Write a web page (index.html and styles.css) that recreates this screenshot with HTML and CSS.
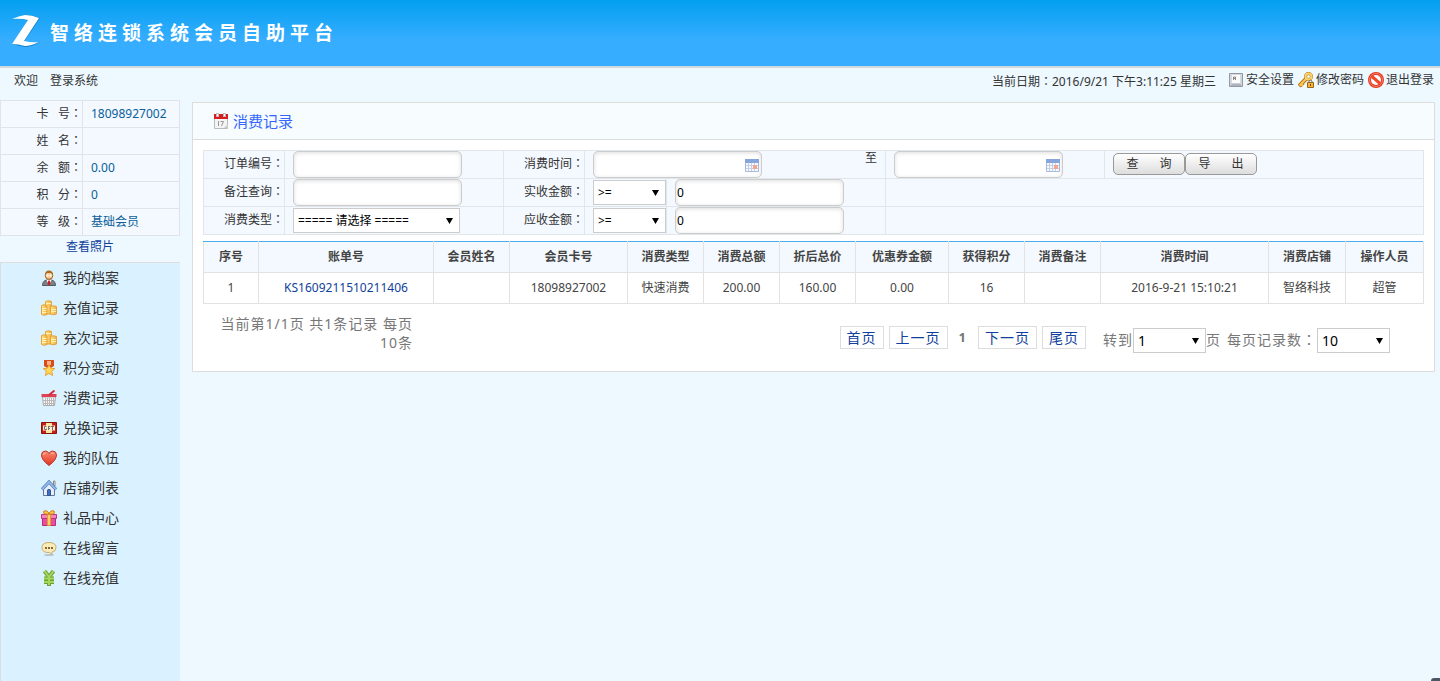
FILE: index.html
```
<!DOCTYPE html>
<html>
<head>
    <meta charset="UTF-8">
    <title>智络连锁系统会员自助平台</title>
    <link rel="stylesheet" href="styles.css">
</head>
<body>

<!-- Shared icons -->
<svg class="defs" width="0" height="0">
    <defs>
        <linearGradient id="gold" x1="0" y1="0" x2="1" y2="0">
            <stop offset="0" stop-color="#ffe98c"/>
            <stop offset="1" stop-color="#f2a93b"/>
        </linearGradient>
        <linearGradient id="red" x1="0" y1="0" x2="0" y2="1">
            <stop offset="0" stop-color="#ff8a70"/>
            <stop offset="1" stop-color="#dd3420"/>
        </linearGradient>
        <symbol id="coins" viewBox="0 0 16 16">
            <path d="M4.500 1.500q3-1.500 6 0v12.500h-6z" fill="url(#gold)" stroke="#e3a23c"/>
            <path d="M.5 5.500q2.500-1.500 5.500 0v9q-3 1.500-5.500 0z" fill="url(#gold)" stroke="#e3a23c"/>
            <path d="M9.500 6.500q3-1.500 6 0v7.500q-3 1.500-6 0z" fill="url(#gold)" stroke="#e3a23c"/>
            <path d="M1 8.500h4.500M1 10.500h4.500M1 12.500h4.500M10 9.500h5M10 11.500h5M5 3.500h5" stroke="#fff3b5"/>
        </symbol>
        <symbol id="datepick" viewBox="0 0 14 14">
            <path d="M.5 2.500h13v11H.5z" fill="#f5f8ff" stroke="#a9bbdc"/>
            <path d="M0 1h14v4H0z" fill="#86a5dc"/>
            <path d="M1 7.500h12M1 10.500h12M3.500 5v8M6.500 5v8M9.500 5v8" stroke="#c3d0ea"/>
            <path d="M8 7h4v4H8z" fill="#f2a58f"/>
        </symbol>
    </defs>
</svg>

<header class="header">
    <svg class="logo" viewBox="0 0 28 32">
        <path d="M1 4Q8 1 14 0Q21 0 28 3L12 27Q20 28 28 27Q20 32 13 32Q7 31 0 29L17 6Q9 3 1 4z" fill="#1680cc"/>
        <path d="M0 4Q7 1 13 0Q20 0 27 3L12 26Q20 28 27 27Q19 31 13 31Q6 29 0 29L16 5Q8 3 0 4z" fill="#fff"/>
    </svg>
    <h1>智络连锁系统会员自助平台</h1>
</header>

<!-- Welcome bar -->
<div class="topbar">
    <div class="welcome"><span>欢迎</span><span>登录系统</span></div>
    <div class="today">当前日期<span class="colon">：</span>2016/9/21 下午3:11:25 星期三</div>
    <a href="#">
        <svg class="icon" viewBox="0 0 16 16">
            <path d="M1.500 1.500h13v13h-13z" fill="#d5d8dd" stroke="#9297a0"/>
            <path d="M4 3h8v8.500H4z" fill="#fbfbfc"/>
            <path d="M2 14l2-2.500h8l2 2.500z" fill="#aeb3bb"/>
            <path d="M5.500 8V5h2v3M5.500 6.500h2" fill="none" stroke="#888"/>
        </svg>安全设置</a>
    <a href="#">
        <svg class="icon" viewBox="0 0 16 16">
            <path d="M8 7l-7 7M3 11.500l2 2" stroke="#b4721a" stroke-width="4"/>
            <circle cx="10.500" cy="4.500" r="3" fill="none" stroke="#b4721a" stroke-width="3"/>
            <path d="M8 7l-6.500 6.500M3 12l2 2" stroke="#ffc84e" stroke-width="2"/>
            <circle cx="10.500" cy="4.500" r="3" fill="none" stroke="#ffd469" stroke-width="2"/>
            <path d="M11 11V9q1.500-2 3 0v2" fill="none" stroke="#777"/>
            <path d="M9.500 10.500h6v5h-6z" fill="#f5b536" stroke="#9b6515"/>
            <path d="M12.500 12v2" stroke="#704500"/>
        </svg>修改密码</a>
    <a href="#">
        <svg class="icon" viewBox="0 0 16 16">
            <circle cx="8" cy="8" r="8" fill="#e33a20"/>
            <circle cx="8" cy="8" r="6.500" fill="none" stroke="#ff8062"/>
            <circle cx="8" cy="8" r="5" fill="#fff"/>
            <path d="M4 4.500l8 7" stroke="#ee4a2c" stroke-width="3"/>
        </svg>退出登录</a>
</div>

<div class="page">
    <aside class="sidebar">
        <table class="member">
            <tr><th>卡&nbsp;&nbsp; 号<span class="colon">：</span></th><td>18098927002</td></tr>
            <tr><th>姓&nbsp;&nbsp; 名<span class="colon">：</span></th><td></td></tr>
            <tr><th>余&nbsp;&nbsp; 额<span class="colon">：</span></th><td>0.00</td></tr>
            <tr><th>积&nbsp;&nbsp; 分<span class="colon">：</span></th><td>0</td></tr>
            <tr><th>等&nbsp;&nbsp; 级<span class="colon">：</span></th><td>基础会员</td></tr>
        </table>
        <a class="photo" href="#">查看照片</a>
        <nav class="menu">
            <a href="#">
                <svg class="icon" viewBox="0 0 16 16">
                    <path d="M1.500 15.500q0-5 4.500-5.500h4q4.500.500 4.500 5.500z" fill="#7c8089" stroke="#54585f"/>
                    <path d="M5.500 10l2.500 5 2.500-5z" fill="#fff"/>
                    <path d="M7.300 10.500h1.500l.700 3.500L8 15.500 6.500 14z" fill="#c32020"/>
                    <circle cx="8" cy="5.500" r="3.800" fill="#f8c78d" stroke="#a8641c"/>
                    <path d="M4 5Q4 .5 8 .5T12 5L10 3H6z" fill="#ad6c20"/>
                    <path d="M5.500 5.500h2M8.500 5.500h2" stroke="#fff" stroke-width="2"/>
                </svg>我的档案</a>
            <a href="#"><svg class="icon"><use href="#coins"/></svg>充值记录</a>
            <a href="#"><svg class="icon"><use href="#coins"/></svg>充次记录</a>
            <a href="#">
                <svg class="icon" viewBox="0 0 16 16">
                    <path d="M3 0h10v6l-5 3-5-3z" fill="#d84b1b"/>
                    <path d="M6 1h4v4H6z" fill="#ffb38a"/>
                    <path d="M8 4.500l1.700 3.700 4 .4-3 2.700.9 4.200L8 13.400l-3.600 2.100.9-4.200-3-2.700 4-.4z" fill="#ffd65b" stroke="#eba02c"/>
                </svg>积分变动</a>
            <a href="#">
                <svg class="icon" viewBox="0 0 16 16">
                    <path d="M1.500 7h13l-1 8.500h-11z" fill="#f8f8f8" stroke="#aaa"/>
                    <path d="M4.500 8v7M6.500 8v7M8.500 8v7M10.500 8v7M12.500 8v7M2 10.500h12M3 13.500h10" stroke="#b8b8b8"/>
                    <path d="M.500 4h15v3H.500z" fill="#df4254"/>
                    <path d="M8 5l5.500-4.500" stroke="#d42b3d" stroke-width="2"/>
                </svg>消费记录</a>
            <a href="#">
                <svg class="icon" viewBox="0 0 16 16">
                    <path d="M.5 2.500h15v11H.5z" fill="#c42217" stroke="#8c130c"/>
                    <path d="M5 3h6v10H5z" fill="#ffe3a0"/>
                    <path d="M2 5.500h12v5H2z" fill="#fff0cf"/>
                    <path d="M5.500 6.500H3.500v3h2v-1M7.500 6v4M7.500 6.500H9.500M7.500 8.500h1.500M10 6.500h3M11.500 6.500v3.500" fill="none" stroke="#77706a"/>
                </svg>兑换记录</a>
            <a href="#">
                <svg class="icon" viewBox="0 0 16 16">
                    <path d="M8 15.500Q.5 10 .5 5 .5 1 4.500 1 7 1 8 3.500 9 1 11.500 1q4 0 4 4 0 5-7.500 10.500z" fill="url(#red)" stroke="#b83a2b"/>
                    <path d="M2.500 5q0-2 2-2M10 3.500q2-1 3 0" stroke="#ffc0b0" fill="none"/>
                </svg>我的队伍</a>
            <a href="#">
                <svg class="icon" viewBox="0 0 16 16">
                    <path d="M12.500 1h1.500v5h-1.500z" fill="#eee" stroke="#888"/>
                    <path d="M2.500 8L8 3l5.500 5v7.500h-11z" fill="#e5edf9" stroke="#60779f"/>
                    <path d="M1 9.500l7-7.500 7 7.500" fill="none" stroke="#426ca9" stroke-width="3"/>
                    <path d="M1 9.500l7-7.500 7 7.500" fill="none" stroke="#8db6ea" stroke-width="2"/>
                    <path d="M6.500 15.500V10q1.500-1.500 3 0v5.500z" fill="#3e70bd" stroke="#315894"/>
                </svg>店铺列表</a>
            <a href="#">
                <svg class="icon" viewBox="0 0 16 16">
                    <path d="M1.500 8h13v7.500h-13z" fill="#e84fa4" stroke="#b52d7b"/>
                    <path d="M.5 4.500h15v4H.5z" fill="#f583bf" stroke="#ba3280"/>
                    <path d="M6.500 4.500h3v11h-3z" fill="#ffd25a" stroke="#e09b2c"/>
                    <path d="M8 4Q1 5 3 1q4-1 5 3Q9 0 13 1q2 4-5 3z" fill="#ffc34c" stroke="#c97b18"/>
                </svg>礼品中心</a>
            <a href="#">
                <svg class="icon" viewBox="0 0 16 16">
                    <ellipse cx="8" cy="15" rx="5" ry="1" fill="#b8c6cc"/>
                    <path d="M8 2.500q7 0 7 5 0 4-4 4.500v2.500L8.500 12.500Q1 13 1 7.500q0-5 7-5z" fill="#fbebb9" stroke="#c9ae6a"/>
                    <path d="M4 7h2v2H4zM7 7h2v2H7zM10 7h2v2h-2z" fill="#86683b"/>
                </svg>在线留言</a>
            <a href="#">
                <svg class="icon" viewBox="0 0 16 16">
                    <path d="M3.500 1L8 7l4.500-6M3 8.500h10M3 12h10M8 7v9" fill="none" stroke="#6ba436" stroke-width="4"/>
                    <path d="M3.500 1L8 7l4.500-6M3 8.500h10M3 12h10M8 7v8" fill="none" stroke="#a7d65d" stroke-width="2"/>
                </svg>在线充值</a>
        </nav>
    </aside>

    <main class="panel">
        <h2 class="panel-title">
            <svg class="icon" viewBox="0 0 16 16">
                <path d="M1.500 5h13v10.500h-13z" fill="#f4f4f4" stroke="#bbb"/>
                <path d="M1 1h14v5H1z" fill="#d91c1c"/>
                <path d="M3 0h3v4H3zM10 0h3v4h-3z" fill="#bbb"/>
                <path d="M4 1h1v2H4zM11 1h1v2h-1z" fill="#fff"/>
                <path d="M5.500 8v5M7.500 8.500h3l-2 4.500" fill="none" stroke="#999"/>
                <path d="M11 15l4-4v4z" fill="#ccc"/>
            </svg>消费记录</h2>

        <!-- Search form -->
        <form class="panel-body">
            <table class="filter">
                <colgroup>
                    <col class="w81"><col class="w219"><col class="w81"><col class="w82"><col class="w219"><col class="w219"><col class="w319">
                </colgroup>
                <tr>
                    <th><label for="orderNo">订单编号<span class="colon">：</span></label></th>
                    <td><input id="orderNo" class="text" type="text"></td>
                    <th><label for="dateFrom">消费时间<span class="colon">：</span></label></th>
                    <td colspan="2">
                        <div class="range">
                            <span class="date"><input id="dateFrom" class="text" type="text"><svg><use href="#datepick"/></svg></span>
                            <label for="dateTo">至</label>
                        </div>
                    </td>
                    <td><span class="date"><input id="dateTo" class="text" type="text"><svg><use href="#datepick"/></svg></span></td>
                    <td><div class="buttons"><button type="button">查&emsp;&ensp; 询</button><button type="button">导&emsp;&ensp; 出</button></div></td>
                </tr>
                <tr>
                    <th><label for="remark">备注查询<span class="colon">：</span></label></th>
                    <td><input id="remark" class="text" type="text"></td>
                    <th><label for="paidOp">实收金额<span class="colon">：</span></label></th>
                    <td><select id="paidOp" class="small"><option>&gt;=</option></select></td>
                    <td><input class="text" type="text" value="0" aria-label="实收金额"></td>
                    <td colspan="2"></td>
                </tr>
                <tr>
                    <th><label for="type">消费类型<span class="colon">：</span></label></th>
                    <td><select id="type" class="wide"><option>===== 请选择 =====</option></select></td>
                    <th><label for="dueOp">应收金额<span class="colon">：</span></label></th>
                    <td><select id="dueOp" class="small"><option>&gt;=</option></select></td>
                    <td><input class="text" type="text" value="0" aria-label="应收金额"></td>
                    <td colspan="2"></td>
                </tr>
            </table>

            <!-- Records -->
            <table class="records">
                <colgroup>
                    <col class="w55"><col class="w175"><col class="w76"><col class="w118"><col class="w76"><col class="w76"><col class="w76"><col class="w93"><col class="w76"><col class="w76"><col class="w168"><col class="w77"><col class="w78">
                </colgroup>
                <tr>
                    <th>序号</th><th>账单号</th><th>会员姓名</th><th>会员卡号</th><th>消费类型</th><th>消费总额</th><th>折后总价</th>
                    <th>优惠券金额</th><th>获得积分</th><th>消费备注</th><th>消费时间</th><th>消费店铺</th><th>操作人员</th>
                </tr>
                <tr>
                    <td>1</td><td><a href="#">KS1609211510211406</a></td><td></td><td>18098927002</td><td>快速消费</td><td>200.00</td><td>160.00</td>
                    <td>0.00</td><td>16</td><td></td><td>2016-9-21 15:10:21</td><td>智络科技</td><td>超管</td>
                </tr>
            </table>

            <!-- Pager -->
            <div class="pager">
                <div class="summary">当前第1/1页 共1条记录 每页10条</div>
                <div class="links">
                    <a href="#">首页</a>
                    <a href="#">上一页</a>
                    <strong>1</strong>
                    <a href="#">下一页</a>
                    <a href="#">尾页</a>
                </div>
                <div class="jump">
                    <label for="pageNo">转到</label>
                    <select id="pageNo" class="small"><option>1</option></select>
                    <span>页</span>
                    <label class="size-label" for="pageSize">每页记录数<span class="colon">：</span></label>
                    <select id="pageSize" class="small"><option>10</option></select>
                </div>
            </div>
        </form>
    </main>
</div>

<div class="corner"></div>

</body>
</html>
```
FILE: styles.css
```
* {
    box-sizing: border-box;
}

body {
    margin: 0;
    min-height: 100vh;
    display: flex;
    flex-direction: column;
    font-family: "Noto Sans", "Noto Sans CJK SC", sans-serif;
    font-size: 12px;
    line-height: 18px;
    color: #333;
    background-color: #edf8ff;
}

a {
    color: #333;
    text-decoration: none;
}

table {
    border-collapse: collapse;
    table-layout: fixed;
    width: 100%;
}

.defs {
    position: absolute;
}

.icon {
    width: 16px;
    height: 16px;
    flex: none;
}

/* Centred full-width colon */
.colon {
    font-family: "Noto Sans CJK TC", sans-serif;
}

/* Header */
.header {
    display: flex;
    align-items: center;
    gap: 10px;
    height: 68px;
    padding: 0 12px 4px;
    background: linear-gradient(#039ff0, #36adff 60%);
    border-bottom: 2px solid #d0d8e0;
}

.logo {
    width: 28px;
    height: 32px;
}

.header h1 {
    margin: 0;
    padding-top: 4px;
    font-size: 19px;
    line-height: 28px;
    letter-spacing: 5px;
    color: #fff;
}

/* Welcome bar */
.topbar {
    display: flex;
    align-items: center;
    gap: 4px;
    height: 24px;
    margin-bottom: 8px;
    padding: 0 6px 0 14px;
}

.welcome {
    display: flex;
    gap: 12px;
    flex: 1;
    padding-top: 2px;
}

.today {
    margin-right: 8px;
    padding-top: 2px;
}

.topbar a {
    display: flex;
    align-items: center;
    gap: 2px;
}

/* Sidebar */
.page {
    display: flex;
    flex: 1;
}

.sidebar {
    display: flex;
    flex-direction: column;
    width: 180px;
    flex: none;
}

.member th, .member td {
    height: 27px;
    padding: 0 0 1px 8px;
    border: 1px solid #e0e4e8;
    background-color: #f3f9ff;
    color: #0a6099;
    text-align: left;
}

.member th {
    width: 82px;
    padding: 0 0 2px;
    font-weight: normal;
    color: #333;
    text-align: right;
}

.photo {
    padding: 2px 0 6px;
    text-align: center;
    color: #10419c;
}

.menu {
    flex: 1;
    border: 1px solid #ddd;
    border-width: 1px 0 0 1px;
    background-color: #daf1ff;
}

.menu a {
    display: flex;
    align-items: center;
    gap: 6px;
    height: 30px;
    padding-left: 40px;
    font-size: 14px;
}

/* Main panel */
.panel {
    flex: 1;
    align-self: flex-start;
    margin: 2px 5px 0 12px;
    border: 1px solid #ddd;
    background-color: #fff;
}

.panel-title {
    display: flex;
    align-items: center;
    gap: 4px;
    height: 37px;
    margin: 0;
    padding-left: 20px;
    border-bottom: 1px solid #ddd;
    background-color: #f7fcff;
    font-size: 15px;
    font-weight: normal;
    color: #36f;
}

.panel-body {
    padding: 10px 10px 18px;
}

/* Search form */
.filter th, .filter td {
    height: 28px;
    padding: 0 0 0 8px;
    border: 1px solid #e0e6ea;
    background-color: #f3f9ff;
    text-align: left;
}

.filter th {
    padding: 0 0 2px;
    font-weight: normal;
    text-align: right;
}

.text {
    display: block;
    width: 169px;
    height: 27px;
    padding: 0 1px;
    border: 1px solid #ccc;
    border-radius: 5px;
    background-color: #fff;
    box-shadow: inset 0 1px 4px #ddd;
    font: inherit;
    color: #000;
}

/* Black drop-down arrow */
select {
    display: block;
    height: 25px;
    padding: 0 4px;
    border: 1px solid #ccc;
    border-radius: 0;
    appearance: none;
    background: #fff url("data:image/svg+xml,%3Csvg xmlns='http://www.w3.org/2000/svg' viewBox='0 0 7 6'%3E%3Cpath d='M0 0h7L3.500 6z'/%3E%3C/svg%3E") no-repeat right 6px center / 7px 6px;
    font: inherit;
    color: #000;
}

.small {
    width: 73px;
}

.wide {
    width: 167px;
}

.date {
    display: block;
    position: relative;
    width: 169px;
}

.date svg {
    position: absolute;
    top: 7px;
    right: 3px;
    width: 14px;
    height: 14px;
}

.range {
    display: flex;
    justify-content: space-between;
    line-height: 14px;
    padding-right: 8px;
}

.buttons {
    display: flex;
    padding-bottom: 2px;
}

.buttons button {
    width: 72px;
    height: 22px;
    padding: 0;
    border: 1px solid #999;
    border-radius: 5px;
    background: linear-gradient(#fff, #ddd);
    font: inherit;
    color: #333;
}

/* Records */
.records {
    margin-top: 6px;
}

.records th, .records td {
    height: 31px;
    padding: 0;
    border: 1px solid #e2e2e2;
    text-align: center;
    color: #444;
}

.records th {
    border-top-color: #4badea;
    background-color: #f3f9ff;
}

.records a {
    color: #10419c;
}

/* Column widths */
.w55 { width: 55px; }
.w76 { width: 76px; }
.w77 { width: 77px; }
.w78 { width: 78px; }
.w81 { width: 81px; }
.w82 { width: 82px; }
.w93 { width: 93px; }
.w118 { width: 118px; }
.w168 { width: 168px; }
.w175 { width: 175px; }
.w219 { width: 219px; }
.w319 { width: 319px; }

/* Pager */
.pager {
    display: flex;
    align-items: flex-start;
    padding: 10px 34px 0 4px;
    font-size: 14px;
    line-height: 19px;
    letter-spacing: 1px;
    color: #777;
}

.summary {
    width: 206px;
    text-align: right;
}

.links, .jump {
    display: flex;
    align-items: center;
    margin-top: 12px;
}

.links {
    gap: 5px;
    margin-left: auto;
}

.links a {
    padding: 1px 6px;
    border: 1px solid #ddd;
    color: #10419c;
}

.links strong {
    padding: 0 6px;
    font-size: 13px;
}

.jump {
    margin-left: 17px;
}

.jump select {
    margin-top: 2px;
    letter-spacing: 0;
}

.size-label {
    margin-left: 6px;
}

/* Tool tab peeking in at the window corner */
.corner {
    position: fixed;
    right: 0;
    bottom: 0;
    width: 9px;
    height: 3px;
    border-top-left-radius: 3px;
    background-color: #4b5563;
}
```
